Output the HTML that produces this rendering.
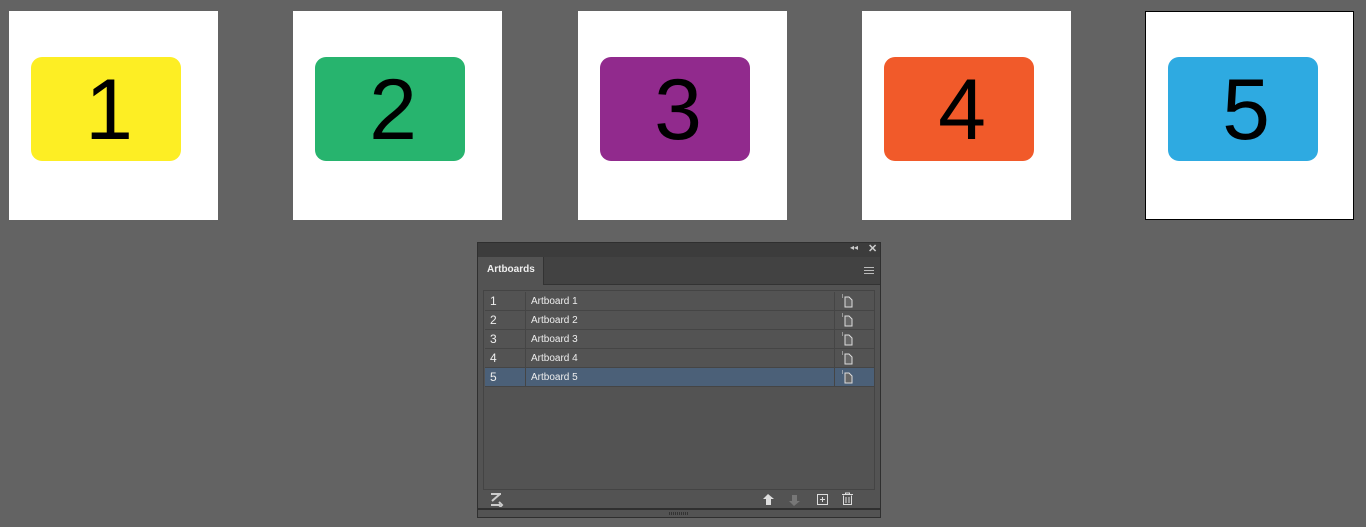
<!DOCTYPE html>
<html><head><style>
body{margin:0;width:1366px;height:527px;background:#636363;position:relative;overflow:hidden;font-family:"Liberation Sans",sans-serif}
.ab{position:absolute;top:11px;width:209px;height:209px;background:#fff;box-sizing:border-box}
.ab .c{position:absolute;left:22px;top:46px;width:150px;height:104px;border-radius:11px;font-size:86px;line-height:106px;text-align:center;color:#000;padding-left:6px;box-sizing:border-box}
.p{position:absolute;left:477px;top:242px;width:404px;height:276px;background:#535353;border:1px solid #2f2f2f;box-sizing:border-box}
.tb{position:absolute;left:0;top:0;width:402px;height:14px;background:#3c3c3c;border-bottom:1px solid #2a2a2a}
.tr{position:absolute;left:0;top:14px;width:402px;height:27px;background:#424242;border-bottom:1px solid #333}
.tab{position:absolute;left:0;top:0;width:66px;height:28px;background:#535353;border-right:1px solid #333;color:#eee;font-size:10px;font-weight:bold;line-height:26px;padding-left:9px;box-sizing:border-box}
.list{position:absolute;left:5px;top:47px;width:392px;height:200px;border:1px solid #444;box-sizing:border-box}
.row{position:absolute;left:1px;width:389px;height:19px;border-bottom:1px solid #454545;box-sizing:border-box;color:#eee}
.row .n{position:absolute;left:5px;top:2px;font-size:12px}
.row .t{position:absolute;left:46px;top:4px;font-size:10px}
.row .d1{position:absolute;left:40px;top:0;width:1px;height:19px;background:#454545}
.row .d2{position:absolute;left:349px;top:0;width:1px;height:19px;background:#454545}
.row svg{position:absolute;left:356px;top:2px}
</style></head><body>
<div class="ab" style="left:9px"><div class="c" style="background:#fdee24">1</div></div>
<div class="ab" style="left:293px"><div class="c" style="background:#27b46e">2</div></div>
<div class="ab" style="left:578px"><div class="c" style="background:#912a8d">3</div></div>
<div class="ab" style="left:862px"><div class="c" style="background:#f15a2a">4</div></div>
<div class="ab" style="left:1145px;border:1px solid #000"><div class="c" style="left:22px;top:45px;background:#2eaae1">5</div></div>
<div class="p">
<div class="tb"><span style="position:absolute;left:372px;top:0;color:#ccc;font-size:8px">◂◂</span><span style="position:absolute;left:390px;top:-1px;color:#ccc;font-size:11px;font-weight:bold">✕</span></div>
<div class="tr"><div class="tab">Artboards</div>
<div style="position:absolute;left:386px;top:10px;width:10px;height:1px;background:#bbb;box-shadow:0 3px #bbb,0 6px #bbb"></div></div>
<div class="list">
<div class="row" style="top:1px"><span class="n">1</span><div class="d1"></div><span class="t">Artboard 1</span><div class="d2"></div><svg width="12" height="14"><path d="M4 3h4l3 3v7H4z" fill="#666" stroke="#ddd"/><path d="M1 1h1M1 3h1" stroke="#ddd"/></svg></div>
<div class="row" style="top:20px"><span class="n">2</span><div class="d1"></div><span class="t">Artboard 2</span><div class="d2"></div><svg width="12" height="14"><path d="M4 3h4l3 3v7H4z" fill="#666" stroke="#ddd"/><path d="M1 1h1M1 3h1" stroke="#ddd"/></svg></div>
<div class="row" style="top:39px"><span class="n">3</span><div class="d1"></div><span class="t">Artboard 3</span><div class="d2"></div><svg width="12" height="14"><path d="M4 3h4l3 3v7H4z" fill="#666" stroke="#ddd"/><path d="M1 1h1M1 3h1" stroke="#ddd"/></svg></div>
<div class="row" style="top:58px"><span class="n">4</span><div class="d1"></div><span class="t">Artboard 4</span><div class="d2"></div><svg width="12" height="14"><path d="M4 3h4l3 3v7H4z" fill="#666" stroke="#ddd"/><path d="M1 1h1M1 3h1" stroke="#ddd"/></svg></div>
<div class="row" style="top:77px;background:#4b6078"><span class="n">5</span><div class="d1"></div><span class="t">Artboard 5</span><div class="d2"></div><svg width="12" height="14"><path d="M4 3h4l3 3v7H4z" fill="#666" stroke="#ddd"/><path d="M1 1h1M1 3h1" stroke="#ddd"/></svg></div>
</div>
<svg style="position:absolute;left:12px;top:250px" width="14" height="14"><path d="M1 1h10M10 1L2 8M1 12h9M9 9l3 3-3 3" stroke="#ccc" stroke-width="2" fill="none"/></svg>
<svg style="position:absolute;left:284px;top:250px" width="14" height="14"><path d="M6 1L1 6h3v6h5V6h3z" fill="#ddd"/></svg>
<svg style="position:absolute;left:310px;top:250px" width="14" height="14"><path d="M6 13L1 8h3V2h5v6h3z" fill="#777"/></svg>
<svg style="position:absolute;left:338px;top:250px" width="14" height="14"><rect x="1.5" y="1.5" width="10" height="10" fill="none" stroke="#ddd"/><path d="M6.5 4v5M4 6.5h5" stroke="#ddd"/></svg>
<svg style="position:absolute;left:363px;top:249px" width="14" height="14"><path d="M1 2.5h11M4.5 2.5V1h4v1.5M2.5 3.5v9h8v-9M5 5v6M8 5v6" stroke="#ddd" fill="none"/></svg>
<div style="position:absolute;left:0;top:265px;width:402px;height:2px;background:#2f2f2f"></div>
<div style="position:absolute;left:191px;top:269px;width:20px;height:3px;background:repeating-linear-gradient(90deg,#333 0 1px,transparent 1px 2px)"></div>
</div>
</body></html>
